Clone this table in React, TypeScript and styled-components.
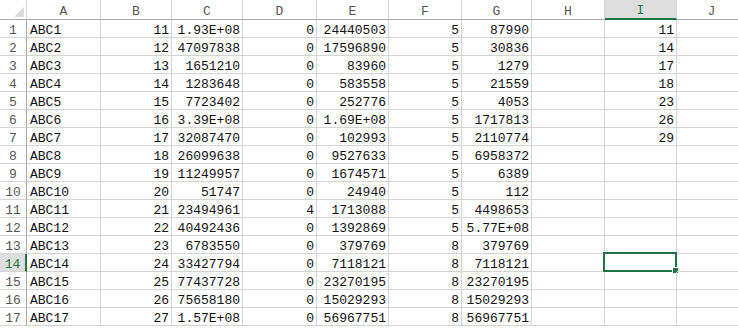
import styled, { createGlobalStyle } from "styled-components";

const GlobalStyle = createGlobalStyle`
  html, body {
    margin: 0;
    padding: 0;
    background: #ffffff;
    overflow: hidden;
  }
`;

const columns = ["A", "B", "C", "D", "E", "F", "G", "H", "I", "J"];
// row-number column first, then A..J
const widths = [27, 74, 71, 71, 74, 72, 73, 70, 73, 72, 70];
const rightAligned = [false, true, true, true, true, true, true, true, true, true];

const data: string[][] = [
  ["ABC1", "11", "1.93E+08", "0", "24440503", "5", "87990", "", "11", ""],
  ["ABC2", "12", "47097838", "0", "17596890", "5", "30836", "", "14", ""],
  ["ABC3", "13", "1651210", "0", "83960", "5", "1279", "", "17", ""],
  ["ABC4", "14", "1283648", "0", "583558", "5", "21559", "", "18", ""],
  ["ABC5", "15", "7723402", "0", "252776", "5", "4053", "", "23", ""],
  ["ABC6", "16", "3.39E+08", "0", "1.69E+08", "5", "1717813", "", "26", ""],
  ["ABC7", "17", "32087470", "0", "102993", "5", "2110774", "", "29", ""],
  ["ABC8", "18", "26099638", "0", "9527633", "5", "6958372", "", "", ""],
  ["ABC9", "19", "11249957", "0", "1674571", "5", "6389", "", "", ""],
  ["ABC10", "20", "51747", "0", "24940", "5", "112", "", "", ""],
  ["ABC11", "21", "23494961", "4", "1713088", "5", "4498653", "", "", ""],
  ["ABC12", "22", "40492436", "0", "1392869", "5", "5.77E+08", "", "", ""],
  ["ABC13", "23", "6783550", "0", "379769", "8", "379769", "", "", ""],
  ["ABC14", "24", "33427794", "0", "7118121", "8", "7118121", "", "", ""],
  ["ABC15", "25", "77437728", "0", "23270195", "8", "23270195", "", "", ""],
  ["ABC16", "26", "75658180", "0", "15029293", "8", "15029293", "", "", ""],
  ["ABC17", "27", "1.57E+08", "0", "56967751", "8", "56967751", "", "", ""],
];

const activeRow = 14;
const activeCol = 8;

const Sheet = styled.div<{ $cols: string }>`
  display: grid;
  grid-template-columns: ${(p) => p.$cols};
  grid-template-rows: 20px;
  grid-auto-rows: 18px;
  width: max-content;
  font-family: "Liberation Mono", "Noto Sans CJK SC", monospace;
  font-size: 13px;
  color: #111111;
`;

const Corner = styled.div`
  position: relative;
  background: #ffffff;
  border-right: 1px solid #d4d4d4;
  border-bottom: 1px solid #ababab;
  box-sizing: border-box;

  &::after {
    content: "";
    position: absolute;
    right: 2px;
    bottom: 2px;
    width: 0;
    height: 0;
    border-left: 10px solid transparent;
    border-bottom: 10px solid #dcdcdc;
  }
`;

const ColHeader = styled.div<{ $active?: boolean }>`
  display: flex;
  align-items: center;
  justify-content: center;
  box-sizing: border-box;
  padding-top: 3px;
  background: ${(p) => (p.$active ? "#dedede" : "#ffffff")};
  color: ${(p) => (p.$active ? "#217346" : "#555555")};
  border-right: 1px solid #d4d4d4;
  border-bottom: ${(p) => (p.$active ? "2px solid #217346" : "1px solid #ababab")};
`;

const RowHeader = styled.div<{ $active?: boolean }>`
  display: flex;
  align-items: center;
  justify-content: center;
  box-sizing: border-box;
  padding-top: 3px;
  background: ${(p) => (p.$active ? "#dedede" : "#ffffff")};
  color: ${(p) => (p.$active ? "#217346" : "#555555")};
  border-right: ${(p) => (p.$active ? "2px solid #217346" : "1px solid #ababab")};
  border-bottom: 1px solid #d4d4d4;
`;

const Cell = styled.div<{ $right?: boolean }>`
  position: relative;
  display: flex;
  align-items: center;
  justify-content: ${(p) => (p.$right ? "flex-end" : "flex-start")};
  box-sizing: border-box;
  padding: 3px 2px 0 3px;
  white-space: pre;
  border-right: 1px solid #d4d4d4;
  border-bottom: 1px solid #d4d4d4;
`;

const Selection = styled.div`
  position: absolute;
  top: -2px;
  left: -2px;
  right: -1px;
  bottom: -1px;
  border: 2px solid #217346;
  pointer-events: none;

  &::after {
    content: "";
    position: absolute;
    right: -4px;
    bottom: -4px;
    width: 5px;
    height: 5px;
    background: #217346;
    border: 1px solid #ffffff;
  }
`;

interface RowProps {
  index: number;
  cells: string[];
}

const Row = ({ index, cells }: RowProps) => (
  <>
    <RowHeader $active={index === activeRow}>{index}</RowHeader>
    {cells.map((v, c) => (
      <Cell key={c} $right={rightAligned[c]}>
        {v}
        {index === activeRow && c === activeCol && <Selection />}
      </Cell>
    ))}
  </>
);

export default function App() {
  const cols = widths.map((w) => `${w}px`).join(" ");
  return (
    <>
      <GlobalStyle />
      <Sheet $cols={cols}>
        <Corner />
        {columns.map((c, i) => (
          <ColHeader key={c} $active={i === activeCol}>
            {c}
          </ColHeader>
        ))}
        {data.map((row, r) => (
          <Row key={r} index={r + 1} cells={row} />
        ))}
      </Sheet>
    </>
  );
}
